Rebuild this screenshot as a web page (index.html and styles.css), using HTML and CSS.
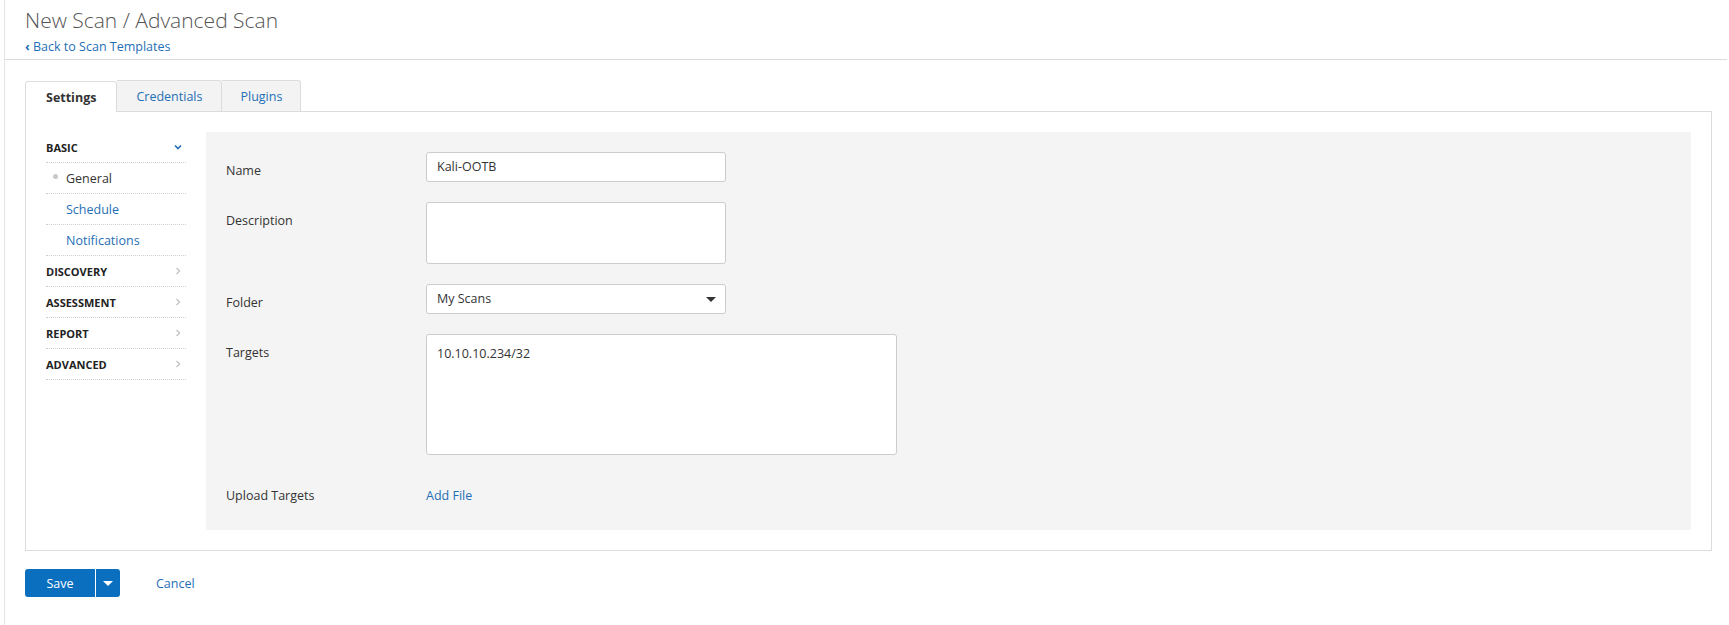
FILE: index.html
```html
<!DOCTYPE html>
<html lang="en">
<head>
    <meta charset="UTF-8">
    <meta name="viewport" content="width=device-width, initial-scale=1.0">
    <title>New Scan / Advanced Scan</title>
    <link rel="stylesheet" href="styles.css">
</head>
<body>
    <div class="page">
        <div class="header">
            <h1>New Scan / Advanced Scan</h1>
            <a class="back-link" href="#"><span class="back-chevron">&#8249;</span> Back to Scan Templates</a>
        </div>

        <div class="content">
            <div class="tabs">
                <div class="tab active">Settings</div>
                <div class="tab">Credentials</div>
                <div class="tab">Plugins</div>
            </div>

            <div class="panel">
                <div class="sidebar">
                    <div class="side-section">
                        <span>BASIC</span>
                        <svg class="chev" width="10" height="10" viewBox="0 0 10 10"><path d="M2 3.5 L5 6.5 L8 3.5" fill="none" stroke="#1f6fb6" stroke-width="1.6"/></svg>
                    </div>
                    <div class="side-item current"><span class="dot"></span>General</div>
                    <div class="side-item">Schedule</div>
                    <div class="side-item">Notifications</div>
                    <div class="side-section">
                        <span>DISCOVERY</span>
                        <svg class="chev" width="10" height="10" viewBox="0 0 10 10"><path d="M3.5 2 L6.5 5 L3.5 8" fill="none" stroke="#c4c4c4" stroke-width="1.4"/></svg>
                    </div>
                    <div class="side-section">
                        <span>ASSESSMENT</span>
                        <svg class="chev" width="10" height="10" viewBox="0 0 10 10"><path d="M3.5 2 L6.5 5 L3.5 8" fill="none" stroke="#c4c4c4" stroke-width="1.4"/></svg>
                    </div>
                    <div class="side-section">
                        <span>REPORT</span>
                        <svg class="chev" width="10" height="10" viewBox="0 0 10 10"><path d="M3.5 2 L6.5 5 L3.5 8" fill="none" stroke="#c4c4c4" stroke-width="1.4"/></svg>
                    </div>
                    <div class="side-section">
                        <span>ADVANCED</span>
                        <svg class="chev" width="10" height="10" viewBox="0 0 10 10"><path d="M3.5 2 L6.5 5 L3.5 8" fill="none" stroke="#c4c4c4" stroke-width="1.4"/></svg>
                    </div>
                </div>

                <div class="form">
                    <div class="row">
                        <label class="row-label">Name</label>
                        <div class="field input">Kali-OOTB</div>
                    </div>
                    <div class="row">
                        <label class="row-label">Description</label>
                        <div class="field textarea"></div>
                    </div>
                    <div class="row">
                        <label class="row-label">Folder</label>
                        <div class="field input select">
                            <span>My Scans</span>
                            <span class="caret"></span>
                        </div>
                    </div>
                    <div class="row">
                        <label class="row-label">Targets</label>
                        <div class="field targets">10.10.10.234/32</div>
                    </div>
                    <div class="row last">
                        <label class="row-label">Upload Targets</label>
                        <a class="add-file" href="#">Add File</a>
                    </div>
                </div>
            </div>

            <div class="actions">
                <div class="save-group">
                    <button class="save">Save</button>
                    <button class="save-more"><span class="caret white"></span></button>
                </div>
                <a class="cancel" href="#">Cancel</a>
            </div>
        </div>
    </div>
</body>
</html>
```

FILE: styles.css
```css
body {
    margin: 0;
    font-family: "Open Sans", "Noto Sans", sans-serif;
    font-size: 12.5px;
    color: #333;
    background-color: #fff;
}
a {
    color: #1f6fb6;
    text-decoration: none;
}
.page {
    margin-left: 4px;
    border-left: 1px solid #e4e4e4;
    min-height: 625px;
}
.header {
    padding: 6px 0 6px 20px;
    margin-right: 2px;
    border-bottom: 1px solid #dcdcdc;
    height: 47px;
}
.header h1 {
    margin: 0;
    font-size: 21px;
    font-weight: 300;
    color: #555;
    line-height: 28px;
}
.back-link {
    display: block;
    margin-top: 4px;
    font-size: 12.5px;
    line-height: 16px;
}
.back-chevron {
    font-weight: bold;
    font-size: 13px;
}
.content {
    padding: 20px 17px 0 20px;
}
.tabs {
    display: flex;
    height: 31px;
}
.tab {
    padding: 0 19px;
    line-height: 31px;
    border: 1px solid #dcdcdc;
    border-bottom: none;
    border-left: none;
    background-color: #f3f3f3;
    color: #1f6fb6;
    border-radius: 0 3px 0 0;
}
.tab:last-child {
    padding: 0 18px;
}
.tab:first-child {
    border-left: 1px solid #dcdcdc;
    border-radius: 3px 3px 0 0;
}
.tab.active {
    background-color: #fff;
    color: #333;
    font-weight: bold;
    padding: 0 20px;
    position: relative;
    top: 1px;
}
.panel {
    display: flex;
    gap: 20px;
    padding: 20px;
    border: 1px solid #dcdcdc;
}
.sidebar {
    width: 140px;
    flex-shrink: 0;
}
.side-section, .side-item {
    display: flex;
    align-items: center;
    height: 30px;
    border-bottom: 1px dotted #cfcfcf;
}
.side-section {
    justify-content: space-between;
    font-size: 11px;
    font-weight: bold;
    color: #222;
}
.side-section .chev {
    margin-right: 3px;
}
.side-item {
    padding-left: 20px;
    color: #1f6fb6;
}
.side-item.current {
    padding-left: 7px;
    color: #333;
}
.dot {
    width: 5px;
    height: 5px;
    border-radius: 50%;
    background-color: #c8c8c8;
    margin-right: 8px;
    margin-top: -4px;
}
.form {
    flex: 1;
    background-color: #f4f4f4;
    padding: 20px 20px 26px;
}
.row {
    display: flex;
    margin-bottom: 20px;
}
.row.last {
    margin-bottom: 0;
}
.row-label {
    width: 200px;
    flex-shrink: 0;
    padding-top: 11px;
    line-height: 16px;
    color: #333;
}
.row.last .row-label, .add-file {
    padding-top: 13px;
    line-height: 16px;
}
.field {
    background-color: #fff;
    border: 1px solid #ccc;
    border-radius: 3px;
    box-sizing: border-box;
    padding: 0 10px;
}
.input {
    width: 300px;
    height: 30px;
    line-height: 28px;
}
.textarea {
    width: 300px;
    height: 62px;
}
.select {
    display: flex;
    justify-content: space-between;
    align-items: center;
}
.caret {
    width: 0;
    height: 0;
    border-left: 5px solid transparent;
    border-right: 5px solid transparent;
    border-top: 5px solid #333;
    margin-right: -1px;
}
.caret.white {
    border-top-color: #fff;
    margin: 0;
}
.targets {
    width: 471px;
    height: 121px;
    padding-top: 11px;
    line-height: 16px;
}
.actions {
    display: flex;
    align-items: center;
    margin-top: 18px;
}
.save-group {
    display: flex;
    gap: 1px;
}
.save-group button {
    height: 28px;
    border: none;
    background-color: #0a6fbf;
    color: #fff;
    font-family: inherit;
    font-size: 12.5px;
    cursor: pointer;
}
.save {
    width: 70px;
    border-radius: 3px 0 0 3px;
}
.save-more {
    width: 24px;
    border-radius: 0 3px 3px 0;
    display: flex;
    align-items: center;
    justify-content: center;
}
.cancel {
    margin-left: 36px;
}
```
